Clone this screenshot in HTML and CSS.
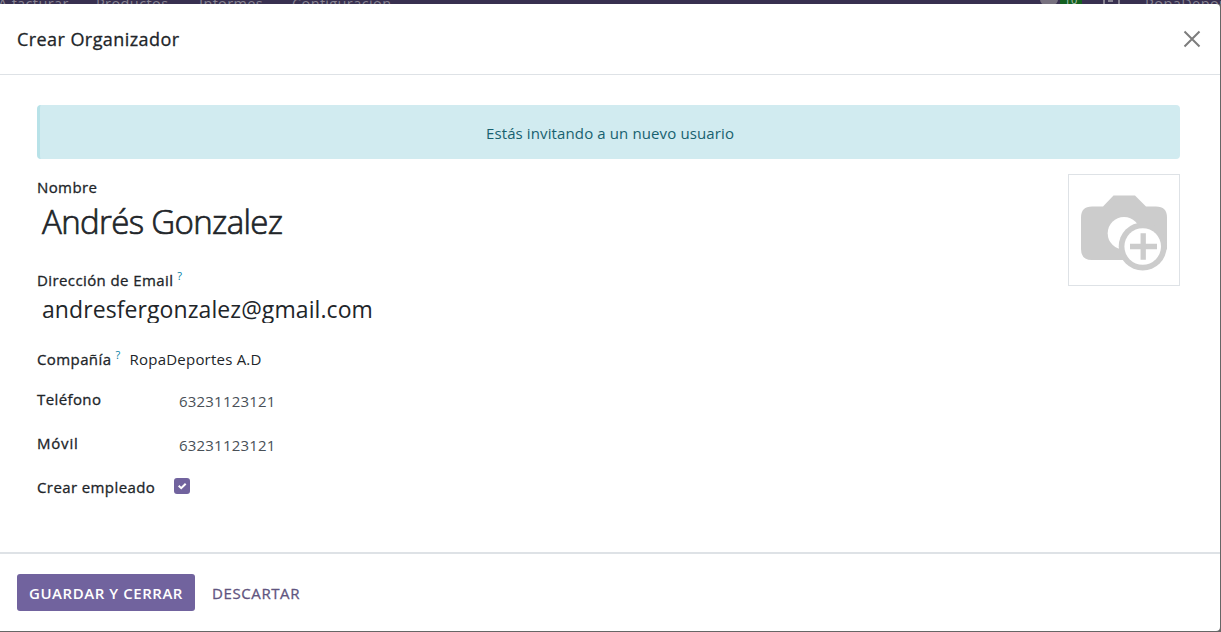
FILE: index.html
```html
<!DOCTYPE html>
<html lang="es">
<head>
<meta charset="utf-8">
<title>Crear Organizador</title>
<link rel="stylesheet" href="styles.css">
</head>
<body>
<nav class="navbar">
  <div class="nav-menu">
    <span class="nav-item nav-first">A facturar</span>
    <span class="nav-item nav-products">Productos</span>
    <span class="nav-item nav-reports">Informes</span>
    <span class="nav-item nav-config">Configuración</span>
  </div>
  <div class="nav-tray">
    <span class="chat-icon"></span>
    <span class="chat-count">10</span>
    <span class="clock-icon"><svg width="13" height="8" viewBox="0 0 13 8"><path d="M7 0v5H3" fill="none" stroke="#878391" stroke-width="2"/></svg></span>
    <span class="nav-item nav-company">RopaDeportes</span>
  </div>
</nav>
<section class="modal" role="dialog">
  <header class="modal-header">
    <h1 class="modal-title">Crear Organizador</h1>
    <button class="close" aria-label="Cerrar">
      <svg width="18" height="18" viewBox="0 0 18 18"><path d="M1.500 1.500l15 15M16.500 1.500l-15 15" fill="none" stroke="#7d7d7d" stroke-width="2"/></svg>
    </button>
  </header>
  <main class="modal-body">
    <div class="alert">Estás invitando a un nuevo usuario</div>
    <div class="sheet">
      <div class="fields">
        <div class="label label-name">Nombre</div>
        <div class="name">Andrés Gonzalez</div>
        <div class="label label-email">Dirección de Email<sup class="help">?</sup></div>
        <div class="email">andresfergonzalez@gmail.com</div>
        <div class="label company">Compañía<sup class="help">?</sup><span class="company-value">RopaDeportes A.D</span></div>
        <div class="row"><span class="label cell">Teléfono</span><span class="phone">63231123121</span></div>
        <div class="row"><span class="label cell mobile">Móvil</span><span class="phone">63231123121</span></div>
        <div class="row"><span class="label cell-check">Crear empleado</span>
          <span class="checkbox"><svg width="16" height="16" viewBox="0 0 16 16"><path d="M4.700 7.800l2.500 2.400 4.500-4.500" fill="none" stroke="#fff" stroke-width="2"/></svg></span>
        </div>
      </div>
      <div class="photo">
        <svg width="110" height="110" viewBox="0 0 110 110">
          <path d="M22 31.500h12l10.500-11h21.500L77 31.500h10q11 0 11 11v32H73L63 85H23q-11 0-11-11V42.500q0-11 11-11z" fill="#ccc"/>
          <circle cx="55" cy="58.300" r="16.300" fill="#fff"/>
          <circle cx="73.700" cy="71.500" r="24" fill="#ccc"/>
          <circle cx="73.700" cy="71.500" r="18.300" fill="#fff"/>
          <path d="M74.200 58.300v26.500M61 71.500h27" stroke="#ccc" stroke-width="5.300"/>
        </svg>
      </div>
    </div>
  </main>
  <footer class="modal-footer">
    <button class="save">GUARDAR Y CERRAR</button>
    <button class="discard">DESCARTAR</button>
  </footer>
</section>
</body>
</html>
```
FILE: styles.css
```css
* { box-sizing: border-box; }
body {
  margin: 0;
  height: 632px;
  overflow: hidden;
  background: #666;
  color: #212529;
  font-family: "Open Sans", "Noto Sans", sans-serif;
  font-size: 15px;
}
button { border: 0; padding: 0; background: none; font: inherit; }
span { white-space: nowrap; }

.navbar {
  display: flex;
  justify-content: space-between;
  height: 4px;
  overflow: hidden;
  background: #383050;
  color: #878391;
  font-size: 14.5px;
  letter-spacing: .4px;
  line-height: 20px;
}
.nav-menu, .nav-tray { display: flex; height: 20px; margin-top: -6px; }
.nav-first { width: 98px; margin-left: -2px; }
.nav-products { width: 103px; }
.nav-reports { width: 93px; }
.nav-tray { width: 181px; }
.nav-tray > span { flex-shrink: 0; }
.chat-icon { width: 18px; height: 11px; border-radius: 8px; background: #77717f; }
.chat-count { width: 22px; margin-left: 2px; background: #136020; color: #b2c5b4; font-size: 11px; line-height: 12px; text-align: center; height: 20px; border-radius: 4px; }
.clock-icon { width: 17px; height: 12px; margin: 0 25px 0 21px; border: 2px solid #878391; border-radius: 2px; line-height: 0; }

.modal {
  display: flex;
  flex-direction: column;
  width: 1220px;
  height: 627px;
  background: #fff;
  border-radius: 0 4px 4px 0;
}
.modal-header {
  display: flex;
  align-items: center;
  justify-content: space-between;
  height: 71px;
  padding: 0 19px 0 17px;
  border-bottom: 1px solid #dee2e6;
}
.modal-title {
  margin: 0;
  font-size: 18px;
  font-weight: 400;
  letter-spacing: .43px;
  line-height: 28px;
  -webkit-text-stroke: .3px;
}
.close { height: 18px; line-height: 0; }

.modal-body { flex: 1; padding: 30px 40px 0 37px; }
.alert {
  height: 54px;
  border-left: 3px solid #b8e2e8;
  border-radius: 4px;
  background: #d1ebf0;
  color: #17616f;
  letter-spacing: .12px;
  line-height: 56px;
  text-align: center;
}
.sheet { display: flex; justify-content: space-between; padding-top: 15px; }
.label { letter-spacing: .4px; line-height: 24px; -webkit-text-stroke: .3px; }
.label-name { height: 24px; margin-top: 1px; }
.name { height: 52px; padding-left: 5px; font-size: 33px; font-weight: 300; letter-spacing: -.65px; line-height: 46px; -webkit-text-stroke: .7px; }
.label-email { height: 24px; margin-top: 17px; }
.help { margin-left: 4px; color: #0180a5; font-size: 11px; line-height: 0; vertical-align: 6px; -webkit-text-stroke: 0; }
.email { height: 31px; padding-left: 5px; overflow: hidden; font-size: 23px; letter-spacing: .08px; line-height: 34px; }
.company { height: 24px; margin-top: 24px; }
.company-value { margin-left: 9px; letter-spacing: .22px; -webkit-text-stroke: 0; }
.row { display: flex; height: 24px; margin-top: 16px; }
.row + .row { margin-top: 20px; }
.cell { width: 142px; }
.mobile { letter-spacing: .8px; }
.phone { color: #495057; letter-spacing: .2px; line-height: 28px; }
.cell-check { width: 137px; }
.checkbox { width: 16px; height: 16px; margin-top: 3px; border-radius: 3px; background: #71639e; line-height: 0; }
.photo { width: 112px; height: 112px; border: 1px solid #dee2e6; line-height: 0; }

.modal-footer {
  display: flex;
  align-items: center;
  gap: 17px;
  height: 79px;
  padding: 0 17px;
  border-top: 2px solid #dee2e6;
}
.save {
  width: 178px;
  height: 37px;
  border-radius: 3px;
  background: #71639e;
  color: #fff;
  font-weight: 600;
  letter-spacing: .55px;
  line-height: 38px;
}
.discard { color: #5f5580; letter-spacing: .6px; line-height: 38px; -webkit-text-stroke: .3px; }
```
